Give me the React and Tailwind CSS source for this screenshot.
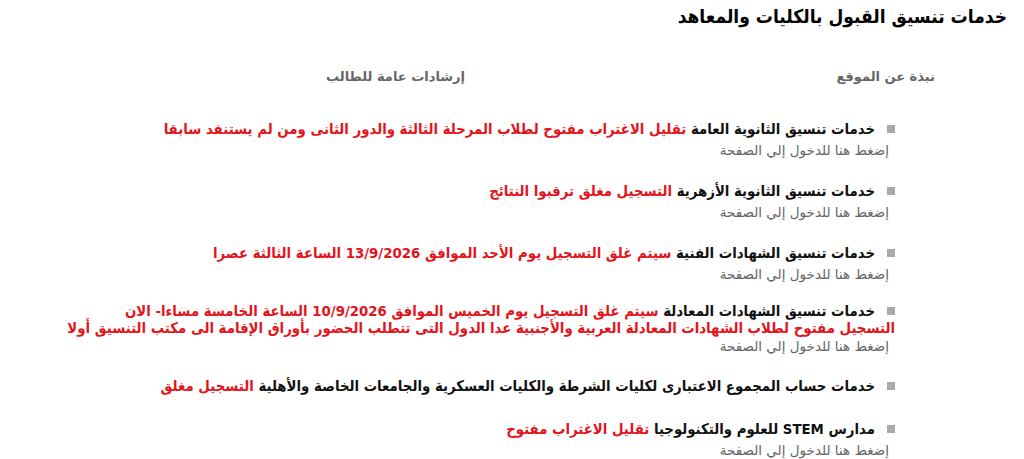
import React from "react";

const services = [
  {
    title: "خدمات تنسيق الثانوية العامة",
    note: ["تقليل الاغتراب مفتوح لطلاب المرحلة الثالثة والدور الثانى ومن لم يستنفد سابقا"],
    link: true,
    gap: "mb-[22px]",
  },
  {
    title: "خدمات تنسيق الثانوية الأزهرية",
    note: ["التسجيل مغلق ترقبوا النتائج"],
    link: true,
    gap: "mb-[22px]",
  },
  {
    title: "خدمات تنسيق الشهادات الفنية",
    note: ["سيتم غلق التسجيل يوم الأحد الموافق 13/9/2026 الساعة الثالثة عصرا"],
    link: true,
    gap: "mb-[18px]",
  },
  {
    title: "خدمات تنسيق الشهادات المعادلة",
    note: [
      "سيتم غلق التسجيل يوم الخميس الموافق 10/9/2026 الساعة الخامسة مساءا- الان",
      "التسجيل مفتوح لطلاب الشهادات المعادلة العربية والأجنبية عدا الدول التى تتطلب الحضور بأوراق الإقامة الى مكتب التنسيق أولا",
    ],
    link: true,
    gap: "mb-[21px]",
    tight: true,
  },
  {
    title: "خدمات حساب المجموع الاعتبارى لكليات الشرطة والكليات العسكرية والجامعات الخاصة والأهلية",
    note: ["التسجيل مغلق"],
    link: false,
    gap: "mb-[26px]",
  },
  {
    title: "مدارس STEM للعلوم والتكنولوجيا",
    note: ["تقليل الاغتراب مفتوح"],
    link: true,
    gap: "mb-0",
  },
];

export default function App() {
  return (
    <div dir="rtl" className="bg-white w-[1024px] h-[459px] overflow-hidden font-['DejaVu_Sans',sans-serif]">
      {/* العنوان */}
      <h1 className="pr-[17px] pt-[3px] font-['DejaVu_Sans_Condensed','DejaVu_Sans',sans-serif] text-[19px] leading-[26px] font-bold text-black">
        خدمات تنسيق القبول بالكليات والمعاهد
      </h1>

      {/* القائمة */}
      <div className="flex mt-[39px] pr-[89px] text-[13px] leading-[18px] font-bold text-[#666]">
        <div className="w-[470px]">نبذة عن الموقع</div>
        <div>إرشادات عامة للطالب</div>
      </div>

      <ul className="mt-[34px] mr-[129px] w-[845px]">
        {services.map((s, i) => (
          <li key={i} className={s.gap}>
            <div className="font-['DejaVu_Sans_Condensed','DejaVu_Sans',sans-serif] text-[14.8px] leading-[17px] font-bold">
              <span className="inline-block w-[8px] h-[8px] bg-[#aaa] ml-[12px] align-[1px]"></span>
              <span className="text-[#111]">{s.title}</span>{" "}
              <span className="text-[#e3141b]">
                {s.note[0]}
                {s.note[1] && (
                  <>
                    <br />
                    {s.note[1]}
                  </>
                )}
              </span>
            </div>
            {s.link && (
              <a
                href="#"
                className={`block ${s.tight ? "mt-[1px]" : "mt-[4px]"} pr-[6px] text-[13.5px] leading-[19px] text-[#666]`}
              >
                إضغط هنا للدخول إلي الصفحة
              </a>
            )}
          </li>
        ))}
      </ul>
    </div>
  );
}
